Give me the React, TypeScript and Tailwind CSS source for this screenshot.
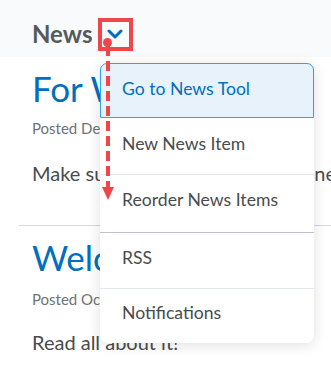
import React from "react";

const FONT = { fontFamily: "Lato, 'Open Sans', sans-serif" };

const MENU = [
  "Go to News Tool",
  "New News Item",
  "Reorder News Items",
  "RSS",
  "Notifications",
];

// Dropdown over the news widget, with the red annotation drawn on top.
function NewsMenu() {
  return (
    <div className="absolute left-[100px] top-[63px] w-[214px] rounded-[8px] bg-white text-[17.6px] leading-[1.2] shadow-[0_2px_14px_rgba(0,0,0,0.13)]">
      <div className="h-[55px] rounded-t-[7px] border border-[#2ea1f7] bg-[#e8f2fa] pl-[21px] pt-[14px] text-[#006fbf]">
        {MENU[0]}
      </div>
      <div className="h-[57px] border-b border-[#e3e9f1] pl-[22px] pt-[15px] text-[#494c4e]">
        {MENU[1]}
      </div>
      <div className="h-[58px] border-b border-[#bcc3cc] pl-[22px] pt-[14px] text-[#494c4e]">
        {MENU[2]}
      </div>
      <div className="h-[56px] border-b border-[#e3e9f1] pl-[22px] pt-[14px] text-[#494c4e]">
        {MENU[3]}
      </div>
      <div className="h-[54px] pl-[22px] pt-[13px] text-[#494c4e]">
        {MENU[4]}
      </div>
    </div>
  );
}

function Annotation() {
  return (
    <>
      <div className="absolute left-[98px] top-[18px] h-[33px] w-[35px] border-[4px] border-[#f2454a]" />
      <div className="absolute left-[103px] top-[38px] h-[9px] w-[9px] rounded-full bg-[#f2454a]" />
      <div className="absolute left-[106px] top-[46px] h-[142px] w-[4px] bg-[repeating-linear-gradient(to_bottom,#f2454a_0_10px,transparent_10px_15px)]" />
      <svg className="absolute left-[102px] top-[187px]" width="12" height="13" viewBox="0 0 12 13">
        <polygon points="0,0 12,0 6,13" fill="#f2454a" />
      </svg>
    </>
  );
}

export default function App() {
  return (
    <div className="relative h-[365px] w-[331px] overflow-hidden bg-white" style={FONT}>
      <div className="flex h-[57px] items-start bg-[#f9fafc] pl-[32px] pt-[20px]">
        <span className="text-[24px] font-bold leading-[1.2] text-[#565a5c]">News</span>
        <svg className="ml-[15px] mt-[9px]" width="16" height="10" viewBox="0 0 16 10">
          <polyline points="2,2 8,8 14,2" fill="none" stroke="#006fbf" strokeWidth="3" strokeLinecap="round" strokeLinejoin="round" />
        </svg>
      </div>

      <div className="whitespace-nowrap pl-[32px]">
        <div className="mt-[10px] text-[35px] leading-[1.2] text-[#006fbf]">For Week 1</div>
        <div className="mt-[10px] text-[15px] leading-[1.2] text-[#6e7376]">Posted Dec 12, 2023 9:00 AM</div>
        <div className="mt-[24px] text-[20px] leading-[1.2] text-[#494c4e]">Make sure you check out all the new</div>
      </div>
      <div className="ml-[19px] mt-[40px] border-t border-[#d3d9e3]" />
      <div className="whitespace-nowrap pl-[32px]">
        <div className="mt-[10px] text-[35px] leading-[1.2] text-[#006fbf]">Welcome</div>
        <div className="mt-[12px] text-[15px] leading-[1.2] text-[#6e7376]">Posted Oct 1, 2023 8:00 AM</div>
        <div className="mt-[22px] text-[20px] leading-[1.2] text-[#494c4e]">Read all about it!</div>
      </div>

      <NewsMenu />
      <Annotation />
    </div>
  );
}
